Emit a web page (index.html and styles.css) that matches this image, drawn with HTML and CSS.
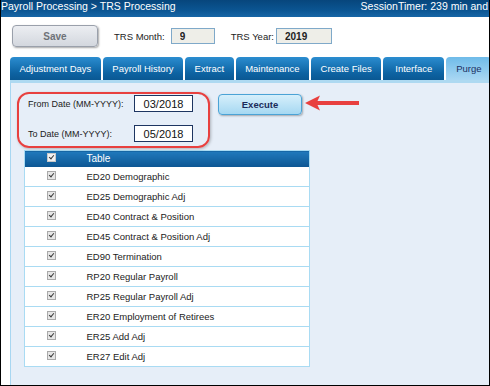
FILE: index.html
```html
<!DOCTYPE html>
<html lang="en">
<head>
  <meta charset="UTF-8" />
  <meta name="viewport" content="width=device-width, initial-scale=1.0"/>
  <title>TRS Processing</title>
  <link rel="stylesheet" href="styles.css">
</head>
<body>

  <div class="frame">
    <header class="topbar">
      <span class="crumbs">Payroll Processing &gt; TRS Processing</span>
      <span class="timer">SessionTimer: 239 min and</span>
    </header>

    <div class="toolbar">
      <button class="save-btn">Save</button>
      <label class="field-label">TRS Month:</label>
      <input class="ro-input month" type="text" value="9" readonly>
      <label class="field-label">TRS Year:</label>
      <input class="ro-input year" type="text" value="2019" readonly>
    </div>

    <div class="tabs">
      <div class="tab">Adjustment Days</div>
      <div class="tab">Payroll History</div>
      <div class="tab">Extract</div>
      <div class="tab">Maintenance</div>
      <div class="tab">Create Files</div>
      <div class="tab wide">Interface</div>
      <div class="tab active">Purge</div>
    </div>

    <div class="panel">
      <div class="purge-row">
        <div class="date-box">
          <div class="date-line">
            <span class="date-label">From Date (MM-YYYY):</span>
            <input class="date-input" type="text" value="03/2018">
          </div>
          <div class="date-line">
            <span class="date-label">To Date (MM-YYYY):</span>
            <input class="date-input" type="text" value="05/2018">
          </div>
        </div>
        <button class="exec-btn">Execute</button>
        <svg class="arrow" width="56" height="16" viewBox="0 0 56 16">
          <path d="M1 8 L16 0.5 L13.5 6 L55 6 L55 10 L13.5 10 L16 15.5 Z" fill="#e8403f"/>
        </svg>
      </div>

      <table class="purge-table">
        <thead>
          <tr>
            <th class="chk-col"><span class="chk head"></span></th>
            <th>Table</th>
          </tr>
        </thead>
        <tbody id="tableRows">
          <!-- filas -->
        </tbody>
      </table>
    </div>
  </div>

  <script>
    const tables = [
      "ED20 Demographic",
      "ED25 Demographic Adj",
      "ED40 Contract & Position",
      "ED45 Contract & Position Adj",
      "ED90 Termination",
      "RP20 Regular Payroll",
      "RP25 Regular Payroll Adj",
      "ER20 Employment of Retirees",
      "ER25 Add Adj",
      "ER27 Edit Adj"
    ];

    const body = document.getElementById("tableRows");
    tables.forEach(name => {
      const row = document.createElement("tr");
      row.innerHTML = `
        <td class="chk-col"><span class="chk"></span></td>
        <td></td>
      `;
      row.children[1].textContent = name;
      body.appendChild(row);
    });
  </script>

</body>
</html>
```

FILE: styles.css
```css
* {
  box-sizing: border-box;
  margin: 0;
  padding: 0;
  font-family: "Liberation Sans", Arial, sans-serif;
}

body {
  background-color: #fff;
}

.frame {
  width: 490px;
  height: 386px;
  border-left: 1px solid #000;
  border-right: 1px solid #000;
  border-bottom: 1px solid #000;
  display: flex;
  flex-direction: column;
  overflow: hidden;
  background-color: #fff;
}

.topbar {
  height: 17px;
  flex-shrink: 0;
  background: linear-gradient(#07467c, #0b5592 60%, #1766a6);
  color: #fff;
  font-size: 10.5px;
  display: flex;
  align-items: flex-start;
  white-space: nowrap;
}

.crumbs {
  line-height: 13px;
}

.timer {
  line-height: 13px;
  margin-left: auto;
  margin-right: 1px;
  flex-shrink: 0;
}

.toolbar {
  height: 40px;
  flex-shrink: 0;
  display: flex;
  align-items: center;
  padding: 0 0 2px 11px;
}

.save-btn {
  width: 86px;
  height: 22px;
  border: 1px solid #9aa0ab;
  border-radius: 4px;
  background: linear-gradient(#eceef2, #d3d7de);
  box-shadow: 1px 1px 2px rgba(0,0,0,0.35);
  color: #6e7278;
  font-weight: bold;
  font-size: 10px;
  margin-right: 16px;
}

.field-label {
  font-size: 9.5px;
  color: #222;
  margin-right: 6px;
}

.ro-input {
  height: 16px;
  border: 1px solid #7fa9c9;
  background-color: #eeeee8;
  font-size: 10px;
  font-weight: bold;
  color: #222;
  padding-left: 8px;
  margin-right: 16px;
}

.ro-input.month {
  width: 44px;
}

.ro-input.year {
  width: 56px;
  margin-left: -4px;
}

.tabs {
  display: flex;
  gap: 2px;
  margin-left: 9px;
  height: 23px;
  flex-shrink: 0;
}

.tab {
  height: 23px;
  line-height: 23px;
  padding: 0 9.5px;
  font-size: 9.5px;
  color: #fff;
  border-radius: 4px 4px 0 0;
  background: linear-gradient(#2b8dd0, #0d63a2 70%, #0a5893);
  white-space: nowrap;
}

.tab.wide {
  padding: 0 12px;
}

.tab.active {
  background: linear-gradient(#6fbbe9, #a9d7f3);
  color: #1c2f63;
  flex: 1;
  padding-left: 10px;
}

.panel {
  flex: 1;
  margin-left: 9px;
  border-left: 1px solid #a7d6f1;
  border-top: 3px solid #aed9f1;
  background-color: #e6eef8;
  padding: 9px 0 0 6px;
}

.purge-row {
  display: flex;
  align-items: flex-start;
}

.date-box {
  width: 193px;
  height: 56px;
  border: 2px solid #e8403f;
  border-radius: 12px;
  box-shadow: 1px 1px 3px rgba(0,0,0,0.25);
  padding: 1px 0 0 9px;
  display: flex;
  flex-direction: column;
  gap: 13px;
}

.date-line {
  display: flex;
  align-items: center;
}

.date-label {
  width: 106px;
  font-size: 9px;
  color: #222;
}

.date-input {
  width: 59px;
  height: 17px;
  border: 1px solid #1d3561;
  background-color: #fff;
  font-size: 11px;
  color: #111;
  text-align: center;
}

.exec-btn {
  width: 84px;
  height: 21px;
  margin: 2px 0 0 8px;
  border: 1px solid #4ba3d6;
  border-radius: 4px;
  background: linear-gradient(#d6effb, #a6d8f2);
  box-shadow: 1px 1px 2px rgba(0,0,0,0.3);
  color: #1b2b5a;
  font-weight: bold;
  font-size: 9.5px;
}

.arrow {
  margin: 3px 0 0 2px;
}

.purge-table {
  width: 286px;
  margin: 2px 0 0 7px;
  border-collapse: collapse;
  background-color: #fff;
  border: 1px solid #a9dbf3;
  font-size: 9.5px;
  color: #222;
}

.purge-table th {
  height: 16px;
  background: linear-gradient(#2079bc, #0c5692);
  color: #fff;
  font-weight: normal;
  text-align: left;
  padding-left: 8px;
  font-size: 10px;
}

.purge-table td {
  height: 20px;
  border-bottom: 1px solid #a9dbf3;
  padding-left: 8px;
}

.purge-table .chk-col {
  width: 54px;
  padding-left: 0;
  text-align: center;
}

.chk {
  display: inline-block;
  width: 9px;
  height: 9px;
  border: 1px solid #a9a9a9;
  background-color: #e6e6e6;
  position: relative;
  vertical-align: middle;
  margin-top: -4px;
}

.chk::after {
  content: "";
  position: absolute;
  left: 2px;
  top: 0px;
  width: 2px;
  height: 4px;
  border-right: 1.5px solid #3a3a3a;
  border-bottom: 1.5px solid #3a3a3a;
  transform: rotate(40deg);
}

.chk.head {
  background-color: #f2f2f2;
  border-color: #c8c8c8;
}
```
